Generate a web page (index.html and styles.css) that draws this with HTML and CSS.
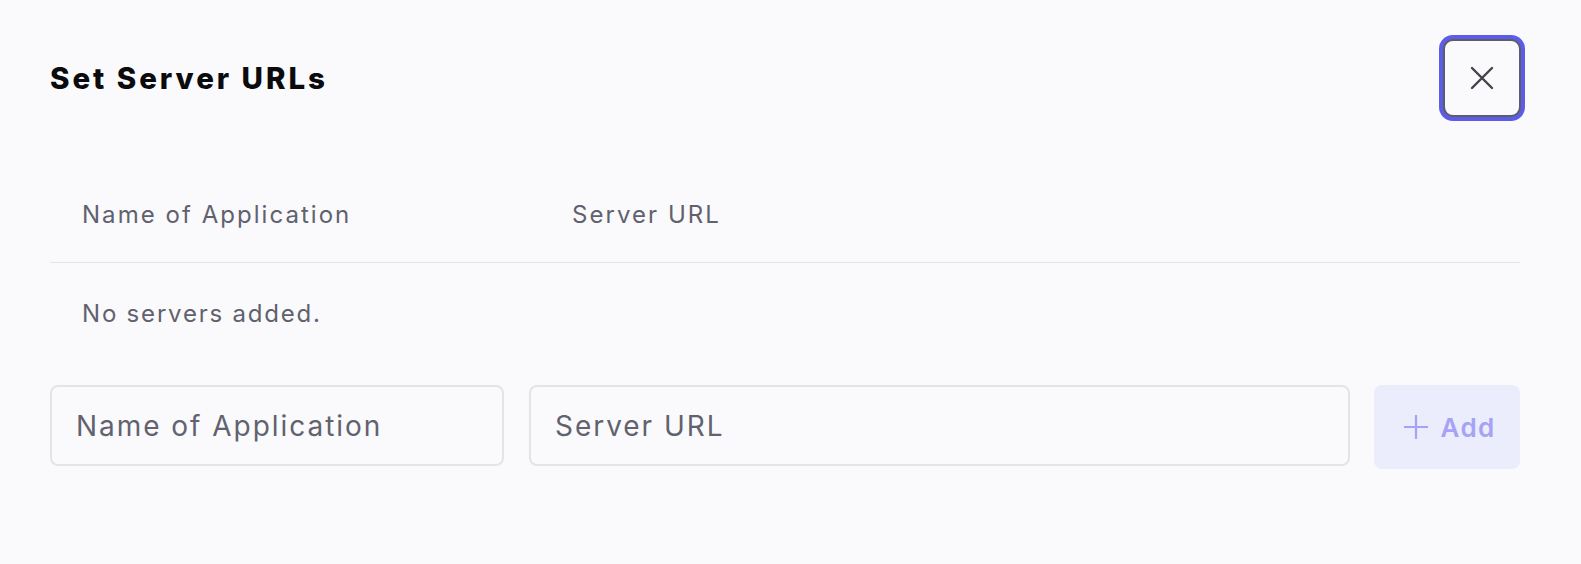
FILE: index.html
```html
<!DOCTYPE html>
<html lang="en">
<head>
<meta charset="utf-8">
<title>Set Server URLs</title>
<link rel="stylesheet" href="styles.css">
</head>
<body>
<div class="modal">
  <div class="modal-header">
    <h2 class="modal-title">Set Server URLs</h2>
    <button class="close-btn" type="button" aria-label="Close">
      <svg width="24" height="24" viewBox="0 0 24 24" fill="none" stroke="currentColor" stroke-width="2.4" stroke-linecap="round">
        <path d="M2 2 L22 22 M22 2 L2 22"/>
      </svg>
    </button>
  </div>
  <div class="table">
    <div class="row head">
      <div class="cell c1">Name of Application</div>
      <div class="cell c2">Server URL</div>
    </div>
    <div class="row empty">
      <div class="cell">No servers added.</div>
    </div>
  </div>
  <div class="form-row">
    <input class="field f-name" type="text" placeholder="Name of Application">
    <input class="field f-url" type="text" placeholder="Server URL">
    <button class="add-btn" type="button">
      <svg width="26" height="26" viewBox="0 0 26 26" fill="none" stroke="currentColor" stroke-width="2.2">
        <path d="M13 1 V25 M1 13 H25"/>
      </svg>
      <span>Add</span>
    </button>
  </div>
</div>
</body>
</html>
```

FILE: styles.css
```css
html, body {
  margin: 0;
  padding: 0;
  background: #fafafc;
}
body {
  font-family: "Inter", "Noto Sans", sans-serif;
  color: #61616e;
}
.modal {
  padding: 39px 61px 0 50px;
}
.modal-header {
  display: flex;
  align-items: center;
  justify-content: space-between;
}
.modal-title {
  margin: 0;
  font-size: 29.5px;
  font-weight: 800;
  letter-spacing: 0.1em;
  color: #0b0b0d;
}
.close-btn {
  box-sizing: border-box;
  width: 78px;
  height: 78px;
  border: 2px solid #5d5d69;
  border-radius: 10px;
  background: #fafafc;
  color: #42424b;
  box-shadow: 0 0 0 4px #5c5ce8;
  display: flex;
  align-items: center;
  justify-content: center;
  padding: 0;
  margin-right: -1px;
}
.table {
  margin-top: 50px;
}
.row {
  display: flex;
  font-size: 24px;
  line-height: 32px;
  letter-spacing: 0.085em;
}
.row.head {
  padding: 32px 0 31px;
  border-bottom: 1px solid #e3e3e8;
}
.row.empty {
  padding: 35px 0 32px;
  letter-spacing: 0.075em;
}
.cell {
  box-sizing: border-box;
  padding-left: 32px;
}
.c1 {
  width: 490px;
}
.form-row {
  display: flex;
  align-items: flex-start;
  gap: 25px;
  margin-top: 23px;
}
.field {
  box-sizing: border-box;
  height: 81px;
  border: 2px solid #e4e4e8;
  border-radius: 8px;
  background: #fafafc;
  padding: 0 24px;
  font-family: inherit;
  font-size: 28px;
  letter-spacing: 0.07em;
  color: #61616e;
  outline: none;
}
.field::placeholder {
  color: #62626f;
}
.f-name {
  width: 454px;
}
.f-url {
  flex: 1;
}
.add-btn {
  box-sizing: border-box;
  width: 146px;
  height: 84px;
  margin-left: -1px;
  border: none;
  border-radius: 8px;
  background: #ebecfc;
  color: #a7a3f4;
  display: flex;
  align-items: center;
  justify-content: center;
  gap: 12px;
  font-family: inherit;
  font-size: 26px;
  font-weight: 600;
  letter-spacing: 0.05em;
  padding: 0 0 0 4px;
}
```
